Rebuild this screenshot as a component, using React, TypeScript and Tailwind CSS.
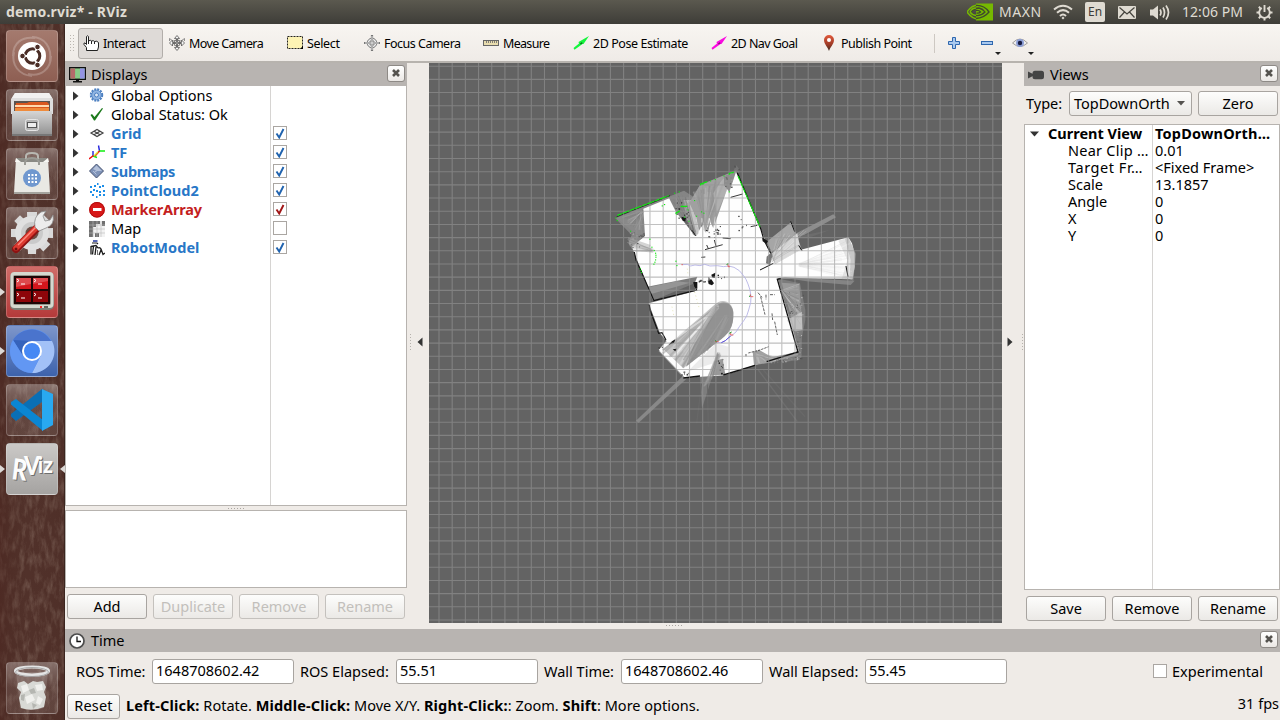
import React from "react";

/* ---------- shared helpers ---------- */

function rng(seed: number) {
  let s = seed;
  return () => {
    s = (s * 1664525 + 1013904223) % 4294967296;
    return s / 4294967296;
  };
}

type Pt = [number, number];

function fan(seed: number, from: Pt, a: Pt, b: Pt, count: number, lo: number, hi: number) {
  const r = rng(seed);
  return Array.from({ length: count }, (_, i) => {
    const t = (i + r()) / count;
    const k = 0.78 + r() * 0.24;
    const ex = a[0] + (b[0] - a[0]) * t;
    const ey = a[1] + (b[1] - a[1]) * t;
    const v = Math.round(lo + r() * (hi - lo));
    return {
      x1: from[0] + (r() - 0.5) * 10,
      y1: from[1] + (r() - 0.5) * 10,
      x2: from[0] + (ex - from[0]) * k,
      y2: from[1] + (ey - from[1]) * k,
      c: `rgb(${v},${v},${v})`,
      o: 0.2 + r() * 0.35,
    };
  });
}

function Fan(p: { seed: number; from: Pt; a: Pt; b: Pt; n: number; w?: number; lo?: number; hi?: number }) {
  return (
    <g strokeWidth={p.w ?? 3}>
      {fan(p.seed, p.from, p.a, p.b, p.n, p.lo ?? 105, p.hi ?? 215).map((l, i) => (
        <line key={i} x1={l.x1} y1={l.y1} x2={l.x2} y2={l.y2} stroke={l.c} opacity={l.o} />
      ))}
    </g>
  );
}

function Specks(p: { seed: number; x: number; y: number; w: number; h: number; n: number; dark?: boolean; slope?: number }) {
  const r = rng(p.seed);
  const items = Array.from({ length: p.n }, () => {
    const dx = r() * p.w;
    return { x: p.x + dx, y: p.y + r() * p.h + dx * (p.slope ?? 0), w: 2 + r() * 3, h: 2 + r() * 3, v: p.dark ? r() * 90 : 70 + r() * 120 };
  });
  return (
    <g>
      {items.map((s, i) => (
        <rect key={i} x={s.x} y={s.y} width={s.w} height={s.h} fill={`rgb(${Math.round(s.v)},${Math.round(s.v)},${Math.round(s.v)})`} />
      ))}
    </g>
  );
}

/* ---------- 3D view ---------- */

const STEP = 13.1857;

function gridPath() {
  let d = "";
  for (let i = -22; i <= 22; i++) {
    const x = 286.9 + i * STEP;
    d += `M${x.toFixed(2)} 0V560`;
    const y = 280.1 + i * STEP;
    d += `M0 ${y.toFixed(2)}H573`;
  }
  return d;
}

const GREEN_DOTS: Pt[] = [
  [46, 202], [50, 210], [90, 242], [148, 266], [154, 290], [161, 300], [165, 308], [166, 314], [166, 320], [165, 328], [163, 335], [160, 341],
  [226, 332], [229, 345], [185, 166], [192, 162], [244, 168], [250, 168], [256, 168], [228, 190], [234, 184], [282, 150],
  [303, 184], [310, 188], [265, 212], [252, 200], [300, 103], [307, 101], [330, 91], [344, 87], [370, 76], [386, 71],
  [396, 66], [119, 354], [121, 360], [123, 366], [386, 124], [288, 197], [262, 178], [236, 124], [222, 128],
];

function MapView() {
  return (
    <svg width="573" height="560" viewBox="0 0 573 560" className="block bg-[#636363]">
      <g transform="translate(171 87) scale(.33333)">
        {/* faint rays outside the room */}
        <path d="M262 665L108 812L116 818L272 675Z" fill="#888" />
        <path d="M300 675L306 775L340 670Z" fill="#7d7d7d" />
        <path d="M475 660L592 815" stroke="#6e6e6e" strokeWidth="4" />
        <path d="M490 660L615 800" stroke="#696969" strokeWidth="4" />
        <path d="M305 700L290 820M322 700L325 830" stroke="#686868" strokeWidth="3" />
        <path d="M510 290L700 193L708 202L600 262L520 320Z" fill="#8d8d8d" />
        <path d="M580 262L690 240L630 262Z" fill="#6c6c6c" />
        <path d="M500 275L574 216L586 245L606 300L520 345L512 300Z" fill="#a6a6a6" />
        <Fan seed={4} from={[512, 335]} a={[530, 255]} b={[625, 240]} n={34} lo={120} hi={225} />
        <path d="M400 64L408 45L420 60L415 75Z" fill="#747474" />
        <Specks seed={31} x={400} y={44} w={16} h={28} n={8} />
        {/* fringe */}
        <path d="M46 205L125 172L252 122L280 140L300 105L410 60L396 100L300 170L120 255L130 280L104 310L85 280L95 255Z" fill="#858585" />
        <path d="M530 385L600 400L616 480L616 510L606 560L604 628L560 635L520 620Z" fill="#7c7c7c" />
        <path d="M255 688L175 602L200 570Z" fill="#a2a2a2" />
        {/* free space */}
        <path d="M130 176L215 142L240 200L285 258L340 180L362 98L408 66L480 232L512 310L525 342L600 300L745 262L756 280L764 310L764 350L758 386L533 385L597 604L462 646L375 676L255 683L176 600L200 574L180 550L146 460L285 424L290 396L150 425L104 312L96 290L135 258Z" fill="#fefefe" />
        <path d="M84 262L152 285L145 300L88 285Z" fill="#aaa" opacity=".5" />
        <Fan seed={12} from={[160, 302]} a={[75, 262]} b={[92, 306]} n={16} w={2} lo={110} hi={190} />
        <path d="M50 204L128 174L112 200L132 258L104 250Z" fill="#8c8c8c" opacity=".6" />
        <Fan seed={14} from={[128, 185]} a={[54, 202]} b={[125, 255]} n={20} w={2} lo={80} hi={240} />
        {/* upper grey cones */}
        <path d="M206 142L252 124L270 145L266 214L245 208L228 186Z" fill="#858585" />
        <path d="M250 150L272 150L285 195L296 250L288 258L262 214Z" fill="#c4c4c4" />
        <Fan seed={2} from={[284, 250]} a={[212, 145]} b={[262, 132]} n={22} lo={90} hi={170} />
        <path d="M268 158L300 105L398 66L370 150L340 235L326 205L318 250L305 205L296 250L285 195Z" fill="#a0a0a0" />
        <Fan seed={7} from={[318, 240]} a={[280, 125]} b={[386, 76]} n={50} w={5} lo={125} hi={200} />
        <path d="M340 130L366 90L392 70L386 110L368 150L350 190Z" fill="#bdbdbd" opacity=".55" />
        <path d="M372 78L408 66L388 126L372 105Z" fill="#8d8d8d" />
        <Specks seed={9} x={370} y={78} w={26} h={36} n={14} />
        <path d="M287 200L298 256L306 205L316 258L328 205L338 252L346 200" fill="none" stroke="#fff" strokeWidth="3" opacity=".6" />
        {/* right corridor shade */}
        <path d="M735 266L745 262L768 312L760 392L748 388L752 330Z" fill="#999" opacity=".4" />
        <path d="M715 272L745 262L768 312L760 392L725 388L742 330Z" fill="#aaa" opacity=".3" />
        <Fan seed={15} from={[600, 345]} a={[748, 268]} b={[762, 394]} n={44} w={2} lo={205} hi={254} />
        <path d="M530 380L640 386L764 392L752 405L620 394Z" fill="#8a8a8a" opacity=".85" />
        <path d="M500 320L522 300L510 345L498 340Z" fill="#777" />
        <path d="M516 310L592 250L602 300L526 342Z" fill="#f0f0f0" opacity=".7" />
        <Fan seed={18} from={[516, 332]} a={[538, 245]} b={[600, 290]} n={12} w={3} lo={130} hi={210} />
        {/* left wedge */}
        <path d="M142 410L292 380L284 400L158 452Z" fill="#7c7c7c" />
        <path d="M146 412L230 394L270 398L154 432Z" fill="#adadad" opacity=".5" />
        {/* lower grey fan */}
        <path d="M400 485C398 455 365 440 342 466L190 598L250 655L350 575C385 555 401 530 400 485Z" fill="#c4c4c4" />
        <path d="M400 488C398 458 366 445 345 472L290 560L258 650L352 576C386 553 402 532 400 488Z" fill="#929292" />
        <Fan seed={22} from={[352, 470]} a={[180, 600]} b={[256, 655]} n={32} w={6} lo={130} hi={235} />
        <Fan seed={23} from={[380, 500]} a={[262, 644]} b={[345, 585]} n={22} w={6} lo={130} hi={170} />
        <path d="M322 498L192 590M300 530L215 625" stroke="#fff" strokeWidth="6" opacity=".5" />
        <path d="M350 578L262 665L340 640Z" fill="#ddd" opacity=".6" />
        {/* lower cones */}
        <path d="M344 632L368 626L376 674L330 676Z" fill="#989898" />
        <Fan seed={25} from={[358, 612]} a={[306, 720]} b={[345, 675]} n={14} w={4} lo={115} hi={190} />
        <path d="M458 605L478 600L515 622L590 606L595 615L520 636L462 646Z" fill="#a0a0a0" />
        <path d="M350 580L385 590L380 660L340 625Z" fill="#aaa" opacity=".2" />
        <Fan seed={26} from={[470, 610]} a={[470, 644]} b={[550, 626]} n={18} w={4} lo={130} hi={215} />
        {/* right-hand side room */}
        <path d="M545 398L598 402L608 540L586 545Z" fill="#999" />
        <Fan seed={28} from={[545, 425]} a={[600, 400]} b={[608, 535]} n={28} w={3} lo={110} hi={210} />
        <path d="M560 510L606 485L607 540L582 543Z" fill="#d5d5d5" opacity=".65" />
        <Specks seed={40} x={565} y={425} w={45} h={70} n={22} />
        <Specks seed={41} x={588} y={545} w={16} h={80} n={36} />
        <Specks seed={42} x={510} y={630} w={90} h={10} n={34} slope={-0.15} />
        <Specks seed={43} x={84} y={240} w={44} h={56} n={12} />
        {/* walls */}
        <g stroke="#111" strokeWidth="4" fill="none">
          <path d="M50 200L210 137" strokeWidth="2" />
          <path d="M103 306L108 330L124 365L162 452L290 420L282 398M148 464L150 480L176 550L186 548L198 570" strokeWidth="3.500" />
          <path d="M250 684L300 678M370 675L465 646M500 635L594 606L532 388L542 386" />
          <path d="M412 68L482 236L492 270L512 310" strokeWidth="3.500" />
          <path d="M480 360L520 340M572 214L584 245M596 286L606 302M738 348L744 380" strokeWidth="3" />
          <path d="M315 299L368 284M320 285L325 296M343 270L348 288M368 264L392 266M304 322L316 321" strokeWidth="2.500" />
          <path d="M275 240L288 258M452 230L472 226M392 142L428 132" strokeWidth="2.500" />
          <path d="M482 440L495 494M516 490L518 510M524 515L532 555M474 428L486 442M510 434H524M498 434V448" strokeWidth="2" strokeDasharray="9 3" />
          <path d="M445 609L480 600L506 590M438 612V622" strokeWidth="2" strokeDasharray="7 3" />
        </g>
        <g fill="#161616">
          <path d="M280 396L292 396L292 416L283 410ZM324 394L334 388L342 400L336 406L326 402ZM334 374L346 368L344 384L336 382Z" />
          <path d="M244 200L258 204L256 214L248 212ZM486 262L504 274L500 282L488 274ZM206 584L216 574L226 568L222 578ZM218 598L230 596L226 604Z" />
        </g>
        <Specks seed={50} x={296} y={380} w={38} h={14} n={12} dark />
        <Specks seed={51} x={312} y={228} w={50} h={34} n={18} dark />
        <Specks seed={52} x={404} y={190} w={46} h={50} n={6} dark />
        <Specks seed={53} x={172} y={590} w={16} h={12} n={4} dark />
        <Specks seed={54} x={346} y={372} w={26} h={12} n={4} dark />
        <Specks seed={55} x={350} y={625} w={24} h={46} n={8} dark />
        <Specks seed={56} x={244} y={664} w={32} h={16} n={6} dark />
        <Specks seed={57} x={225} y={148} w={42} h={60} n={14} dark />
      </g>
      <path d={gridPath()} stroke="#969696" strokeOpacity=".6" strokeWidth="1.1" fill="none" />
      <g transform="translate(171 87) scale(.33333)" fill="none">
        {/* laser hits */}
        <g stroke="#12e512" strokeWidth="3.500">
          <path d="M52 196L206 137M414 78L480 230" strokeDasharray="14 2 22 2" />
          <path d="M300 103L322 95M386 71L402 66M226 190L240 182M242 169H262" />
        </g>
        <g fill="#12e512">
          {GREEN_DOTS.map(([x, y]) => (
            <rect key={`${x}-${y}`} x={x} y={y} width="3.500" height="3.400" />
          ))}
        </g>
        <path
          d="M246 344L262 343L272 348L285 345L300 347L314 343L330 348L352 347L370 350L386 348L402 352L418 362L430 376L438 388L444 402L450 420L453 440L452 458L446 480L440 498L430 514L418 530L408 546L396 556L386 562L376 572L364 578L350 577"
          stroke="#b4b1e4"
          strokeWidth="2.600"
        />
        <path d="M392 558L376 572L364 578" stroke="#5a4fd6" strokeWidth="3" />
        <path d="M384 342V350H390M451 433V440H460M392 547V555H400M345 575H356" stroke="#e85050" strokeWidth="2.500" />
        <path d="M380 345L384 340M447 440L451 437M388 550L395 546M345 571L350 576" stroke="#18a030" strokeWidth="3" />
        <path d="M244 344H249" stroke="#e07070" strokeWidth="3" />
        <path d="M262 356L264 374M284 426L298 476M216 470L222 500" stroke="#d8d79a" strokeWidth="2" strokeDasharray="3 8" />
      </g>
    </svg>
  );
}

/* ---------- launcher ---------- */

function Tile({ tone, left, right, children }: { tone: string; left?: boolean; right?: boolean; children: React.ReactNode }) {
  return (
    <div className="relative flex h-[52px] w-[65px] shrink-0 items-center justify-center pr-px">
      {left && (
        <svg width="5" height="8" viewBox="0 0 5 8" className="absolute left-0 top-[22px]">
          <path d="M0 0L5 4L0 8Z" fill="#dcd9d6" />
        </svg>
      )}
      <div className={`flex h-[52px] w-[52px] items-center justify-center rounded-[4px] border border-white/20 ${tone}`}>{children}</div>
      {right && (
        <svg width="5" height="8" viewBox="0 0 5 8" className="absolute right-0 top-[22px]">
          <path d="M5 0L0 4L5 8Z" fill="#dcd9d6" />
        </svg>
      )}
    </div>
  );
}

const GLASS = "bg-linear-to-b from-white/30 via-white/10 to-white/10";

function Launcher() {
  return (
    <aside className="relative flex w-[65px] shrink-0 flex-col bg-[#51312a] pt-[6px] pb-[6px]">
      <svg className="absolute inset-0" width="65" height="696">
        <defs>
          <filter id="wood" x="0" y="0" width="100%" height="100%">
            <feTurbulence type="fractalNoise" baseFrequency=".2 .07" numOctaves="4" seed="5" />
            <feColorMatrix values="0 0 0 0 .52  0 0 0 0 .42  0 0 0 0 .34  1.2 0 0 0 -.5" />
          </filter>
          <linearGradient id="shade">
            <stop offset="0" stopColor="#4a241e" stopOpacity=".5" />
            <stop offset=".4" stopColor="#4a2a22" stopOpacity="0" />
            <stop offset="1" stopColor="#3a1f19" stopOpacity=".1" />
          </linearGradient>
        </defs>
        <rect width="65" height="696" filter="url(#wood)" opacity=".5" />
        <rect width="65" height="696" fill="url(#shade)" />
        <path d="M64.5 0V696" stroke="#3b251f" />
      </svg>
      <div className="relative flex flex-1 flex-col gap-[7px]">
        <Tile tone="bg-linear-to-b from-[#a47a6e] to-[#8e5f53]">
          <svg width="50" height="50" viewBox="0 0 50 50" fill="none">
            <path d="M25 6C38 6 45 17 43 30M44 25C44 38 34 46 21 43M25 45C12 44 4 34 7 21M6 25C6 12 15 5 28 7" stroke="#fff" strokeOpacity=".22" strokeWidth="2" />
            <circle cx="25" cy="25" r="14" fill="#fff" />
            <circle cx="25.500" cy="25" r="7.300" stroke="#4a2d26" strokeWidth="3" />
            <path d="M25.500 25L13 25M25.500 25L32 14M25.500 25L32 36" stroke="#fff" strokeWidth="1.800" />
            <g fill="#4a2d26" stroke="#fff" strokeWidth="1">
              <circle cx="15.500" cy="25" r="2.800" />
              <circle cx="30.500" cy="16" r="2.800" />
              <circle cx="30.500" cy="34" r="2.800" />
            </g>
          </svg>
        </Tile>
        <Tile tone={GLASS}>
          <svg width="50" height="50" viewBox="0 0 50 50">
            <defs>
              <linearGradient id="cab" x2="0" y2="1">
                <stop offset="0" stopColor="#d6d6d6" />
                <stop offset="1" stopColor="#8f8f8f" />
              </linearGradient>
            </defs>
            <path d="M8 3H42L46 9V24H4V9Z" fill="#dedede" />
            <path d="M8 3H42L45 8H5Z" fill="#f1f1f1" />
            <rect x="7" y="11" width="36" height="11" fill="#5a5450" />
            <path d="M9 13H20L22 12H40L42 14V22H8Z" fill="#d9581f" />
            <rect x="8" y="15" width="34" height="2" fill="#ffd9ae" />
            <rect x="8" y="18" width="34" height="4" fill="#ef8b3c" />
            <path d="M5 21H45V46H5Z" fill="url(#cab)" />
            <path d="M5 44H45V46H5Z" fill="#777" />
            <rect x="18.500" y="29.500" width="13" height="11" rx="2" fill="#b5b5b5" stroke="#e6e6e6" />
            <rect x="20.500" y="32.500" width="9" height="5" fill="#eee" stroke="#555" strokeWidth="1" />
          </svg>
        </Tile>
        <Tile tone={GLASS}>
          <svg width="50" height="50" viewBox="0 0 50 50">
            <path d="M9 9L41 9L43 44H7Z" fill="#e9e9e4" />
            <path d="M7 43H43V45H7Z" fill="#a4a49e" />
            <path d="M9 9L41 9L40 13L10 13Z" fill="#8a8a84" />
            <path d="M9 9L14 13H8ZM41 9L36 13H42Z" fill="#f8f8f4" />
            <g fill="none" strokeWidth="2">
              <path d="M19 10V7Q19 4 25 4Q31 4 31 7V10" stroke="#b8b8b2" />
              <path d="M18 16V14Q18 9 25 9Q32 9 32 14V16" stroke="#9a9a94" />
            </g>
            <circle cx="25" cy="29" r="9" fill="#7098cf" />
            <path d="M21 25h2v2h-2zM24.500 25h2v2h-2zM28 25h2v2h-2zM21 28.500h2v2h-2zM24.500 28.500h2v2h-2zM28 28.500h2v2h-2zM21 32h2v2h-2zM24.500 32h2v2h-2zM28 32h2v2h-2z" fill="#fff" />
          </svg>
        </Tile>
        <Tile tone={GLASS}>
          <svg width="50" height="50" viewBox="0 0 50 50">
            <g transform="translate(25 25)">
              <g fill="#d9d9d9">
                {[0, 45, 90, 135].map((a) => (
                  <path key={a} d="M-5 -21H5L4 21H-4Z" transform={`rotate(${a})`} />
                ))}
              </g>
              <circle r="17" fill="#e0e0e0" />
              <circle r="11" fill="#cacaca" />
              <circle r="6.500" fill="#6c4e46" />
            </g>
            <path d="M9 41L32 18" stroke="#8e1212" strokeWidth="8" strokeLinecap="round" />
            <path d="M9 40L31 18" stroke="#dc3a30" strokeWidth="5.500" strokeLinecap="round" />
            <path d="M11 37L29 19" stroke="#ff8b7e" strokeWidth="1.500" />
            <path d="M28 19Q26 9 34 4L39 3L36 8L38 13L43 12L46 7Q48 17 39 20L32 23Z" fill="#ececec" stroke="#8c8c8c" strokeWidth=".8" />
            <circle cx="9" cy="41" r="1.500" fill="#6c1010" />
          </svg>
        </Tile>
        <Tile tone="bg-linear-to-b from-[#cf6c68] to-[#b43a3a]" left>
          <svg width="50" height="50" viewBox="0 0 50 50">
            <rect x="3" y="5" width="44" height="38" rx="5" fill="#7e8078" />
            <rect x="3.500" y="5" width="43" height="36" rx="4" fill="#d5d8cf" />
            <rect x="6" y="8" width="38" height="30" rx="2" fill="#93958c" />
            <rect x="7" y="9" width="36" height="28" fill="#1e0505" />
            <path d="M9 11H24V22H9ZM26 11H41V22H26Z" fill="#d5161c" />
            <path d="M9 24H24V35H9ZM26 24H41V35H26Z" fill="#8d0509" />
            <path d="M9 11H24V17L9 20ZM26 11H41V14L26 17Z" fill="#fff" opacity=".22" />
            <path d="M10 12L12 13.500L10 15M14 17H18M27 12L29 13.500L27 15M31 17H35M10 26L12 27.500L10 29M14 31H18M27 26L29 27.500L27 29M31 31H35" stroke="#fff" fill="none" />
            <rect x="33" y="39" width="2" height="2" fill="#f22" />
            <rect x="37" y="39" width="4" height="2" fill="#62645c" />
          </svg>
        </Tile>
        <Tile tone="bg-linear-to-b from-[#7e96ca] to-[#3d62ac]" left>
          <svg width="50" height="50" viewBox="0 0 50 50">
            <circle cx="25" cy="25" r="22" fill="#5a8fee" />
            <path d="M25 25L6 14A22 22 0 0 1 44 15H25Z" fill="#4a74cd" />
            <path d="M25 15H45A22 22 0 0 1 25 47L33.700 30Z" fill="#a2c1f7" />
            <path d="M25 15L6 14L16 30Z" fill="#3563bc" />
            <path d="M6 14A22 22 0 0 0 25 47L33 31L16 30Z" fill="#6297f3" />
            <circle cx="25" cy="25" r="10" fill="#fff" />
            <circle cx="25" cy="25" r="8" fill="#4688f4" />
          </svg>
        </Tile>
        <Tile tone={GLASS}>
          <svg width="50" height="50" viewBox="0 0 50 50">
            <path d="M35 4V17L9 36L4 31.500V29Z" fill="#0a6fb5" />
            <path d="M4 17L9 14L36 35V46L4 19.500Z" fill="#0b86d2" />
            <path d="M35 4L46 9V40L35 46Z" fill="#29a9f0" />
          </svg>
        </Tile>
        <Tile tone="bg-linear-to-b from-[#cbc9c7] to-[#a5a3a1]" left right>
          <svg width="50" height="50" viewBox="0 0 50 50" fontFamily="Lato, sans-serif" fontWeight="900">
            <g fill="#6e6e6e">
              <text x="5" y="36" fontSize="29" textLength="15" lengthAdjust="spacingAndGlyphs" transform="rotate(7 5 36)">R</text>
              <text x="18" y="31.500" fontSize="26" textLength="16" lengthAdjust="spacingAndGlyphs">V</text>
              <text x="32" y="30" fontSize="22" textLength="5" lengthAdjust="spacingAndGlyphs">i</text>
              <text x="37" y="29.500" fontSize="22" textLength="10" lengthAdjust="spacingAndGlyphs">z</text>
            </g>
            <g fill="#fdfdfd">
              <text x="4" y="35" fontSize="29" textLength="15" lengthAdjust="spacingAndGlyphs" transform="rotate(7 4 35)">R</text>
              <text x="17" y="30.500" fontSize="26" textLength="16" lengthAdjust="spacingAndGlyphs">V</text>
              <text x="31" y="29" fontSize="22" textLength="5" lengthAdjust="spacingAndGlyphs">i</text>
              <text x="36" y="28.500" fontSize="22" textLength="10" lengthAdjust="spacingAndGlyphs">z</text>
            </g>
          </svg>
        </Tile>
        <div className="flex-1" />
        <Tile tone={GLASS}>
          <svg width="50" height="50" viewBox="0 0 50 50">
            <path d="M9 9L13 45Q25 49 37 45L41 9Z" fill="#fff" opacity=".14" />
            <path d="M11 20L17 18L21 21L26 18L30 19L36 18L39 24L37 29L39 34L37 44Q25 49 14 45L12 35L14 29L10 25Z" fill="#d8d9d5" />
            <path d="M14 23L20 21L22 27L16 30ZM28 22L35 21L36 27L30 28ZM18 34L25 31L28 37L20 41ZM31 33L36 36L33 42L29 40Z" fill="#f0f0ed" />
            <path d="M22 27L27 25L29 30L24 31ZM14 32L18 31L17 38L14 37ZM25 40L30 42L26 46Z" fill="#b5b6b1" />
            <ellipse cx="25" cy="8" rx="16.500" ry="4" fill="none" stroke="#e4e4e4" strokeWidth="3.200" />
            <ellipse cx="25" cy="9" rx="16.500" ry="4.500" fill="none" stroke="#999" strokeWidth=".8" />
          </svg>
        </Tile>
      </div>
    </aside>
  );
}

/* ---------- top bar ---------- */

function TopBar() {
  return (
    <header className="flex h-6 items-center bg-linear-to-b from-[#5b594f] to-[#3e3d38] text-[#dfdbd2]">
      <div className="w-[967px] whitespace-pre pl-[6px] text-[14px] font-bold leading-6 tracking-[0.2px]">demo.rviz* - RViz</div>
      <div className="w-8">
        <svg width="27" height="18" viewBox="0 0 27 18">
          <rect x="9" y="0.500" width="17" height="17" fill="#76b900" />
          <path d="M0 9Q5 2 11 2Q18 2 23 9Q18 16 11 16Q5 16 0 9Z" fill="none" stroke="#76b900" strokeWidth="1.600" />
          <path d="M9 2.500Q17 2 22 9Q17 15 9 15.500M4 9Q7 5 12 5Q16 6 18 9Q14 13 9 12.500Q5 11 4 9M9 7.500Q12 7 13.500 9Q12 10.500 9.500 10" fill="none" stroke="#3f4a2c" strokeWidth="1.300" />
          <path d="M3 9Q5 5 9 5M9 12.500Q5 12 3 9" fill="none" stroke="#76b900" strokeWidth="1.400" />
        </svg>
      </div>
      <div className="w-[54px] text-[14px] leading-6 tracking-[0.55px]">MAXN</div>
      <div className="w-8">
        <svg width="20" height="18" viewBox="0 0 20 18" fill="none" stroke="#dfdbd2" strokeWidth="2">
          <path d="M1 6.500Q10 -1 19 6.500" />
          <path d="M4 9.700Q10 4.500 16 9.700" />
          <path d="M7 13Q10 10 13 13" />
          <path d="M8.500 15L10 13.500L11.500 15L10 16.500Z" fill="#dfdbd2" stroke="none" />
        </svg>
      </div>
      <div className="w-[33px]">
        <div className="flex h-5 w-5 items-center justify-center rounded-[2px] bg-[#dfdbd2] text-[12px] text-[#3c3b37]">En</div>
      </div>
      <div className="w-8">
        <svg width="18" height="13" viewBox="0 0 18 13">
          <rect width="18" height="13" rx="1" fill="#dfdbd2" />
          <path d="M1.500 1.500L9 8L16.500 1.500M1.500 11.500L6.500 6M16.500 11.500L11.500 6" fill="none" stroke="#45443e" strokeWidth="1.200" />
        </svg>
      </div>
      <div className="w-8">
        <svg width="21" height="17" viewBox="0 0 21 17">
          <path d="M0 5.500H3L8 1.500V15.500L3 11.500H0Z" fill="#dfdbd2" />
          <path d="M10 5.500Q12 8.500 10 11.500M13 3.500Q16 8.500 13 13.500M16 1.500Q21 8.500 16 15.500" fill="none" stroke="#dfdbd2" strokeWidth="1.700" />
        </svg>
      </div>
      <div className="w-[74px] whitespace-pre text-[14px] leading-6 tracking-[0.050px]">12:06 PM</div>
      <svg width="17" height="17" viewBox="0 0 17 17" fill="none" stroke="#dfdbd2">
        <path d="M5.800 4A5.300 5.300 0 1 0 11.200 4" strokeWidth="1.900" />
        <path d="M8.500 1V8" strokeWidth="1.900" />
        <path d="M0.500 8.500H3M14 8.500H16.500M2.800 2.800L4.700 4.700M14.200 2.800L12.300 4.700M2.800 14.200L4.700 12.300M14.200 14.200L12.300 12.300M8.500 14V16.500" strokeWidth="2" />
      </svg>
    </header>
  );
}

/* ---------- toolbar ---------- */

const Crosshair = ({ globe }: { globe?: boolean }) => (
  <svg width="16" height="16" viewBox="0 0 16 16" fill="none" stroke="#555" strokeWidth="1">
    {globe ? (
      <>
        <circle cx="8" cy="8" r="4.800" fill="#efefef" stroke="#777" />
        <circle cx="8" cy="8" r="2.500" stroke="#777" />
        <path d="M8 0V16M0 8H16" stroke="#777" strokeWidth="2.200" />
        <path d="M8 1V15M1 8H15" stroke="#fff" strokeWidth=".8" />
      </>
    ) : (
      <>
        <path d="M8 0.500L10.500 3.500H8.500V7.500H12.500V5L15.500 8L12.500 11V8.500H8.500V12.500H10.500L8 15.500L5.500 12.500H7.500V8.500H3.500V11L0.500 8L3.500 5V7.500H7.500V3.500H5.500Z" fill="#f6f6f6" strokeWidth=".8" />
        <circle cx="8" cy="8" r="3.200" strokeWidth=".8" />
        <path d="M.5 3.500L4 6L8 5.500L12 6L15.500 3.500M.5 3.500V6M15.500 3.500V6" stroke="#777" strokeWidth=".8" />
      </>
    )}
  </svg>
);

const Arrow = ({ c, d }: { c: string; d: string }) => (
  <svg width="16" height="16" viewBox="0 0 16 16">
    <path d="M0.500 13L6 8.500L5.500 7L16 1L10.500 9L9.500 9L1.500 14.800Z" fill={c} />
    <path d="M7 8.500L9 7L9.500 8.500L7.500 9.500Z" fill={d} />
  </svg>
);

function Toolbar() {
  const items: { w: string; icon: React.ReactNode; label: string; tr: string }[] = [
    { w: "w-[118px]", icon: <Crosshair />, label: "Move Camera", tr: "tracking-[-0.62px]" },
    {
      w: "w-[77px]",
      icon: (
        <svg width="16" height="16" viewBox="0 0 16 16">
          <rect x=".5" y="1.500" width="15" height="12" fill="#fdf3b4" stroke="#222" strokeDasharray="2 1" />
          <path d="M16 11V14H13Z" fill="#000" />
        </svg>
      ),
      label: "Select",
      tr: "tracking-[-0.35px]",
    },
    { w: "w-[119px]", icon: <Crosshair globe />, label: "Focus Camera", tr: "tracking-[-0.5px]" },
    {
      w: "w-[90px]",
      icon: (
        <svg width="16" height="16" viewBox="0 0 16 16">
          <rect x=".5" y="5.500" width="15" height="5" fill="#e8dcae" stroke="#666" />
          <path d="M3.500 6V8M5.500 6V8M7.500 6V8M9.500 6V8M11.500 6V8M13.500 6V8" stroke="#666" strokeWidth=".8" />
        </svg>
      ),
      label: "Measure",
      tr: "tracking-[-0.68px]",
    },
    { w: "w-[138px]", icon: <Arrow c="#14f53c" d="#0a6e1c" />, label: "2D Pose Estimate", tr: "tracking-[-0.44px]" },
    { w: "w-[110px]", icon: <Arrow c="#fa0ae0" d="#8a0a7c" />, label: "2D Nav Goal", tr: "tracking-[-0.55px]" },
    {
      w: "w-[113px]",
      icon: (
        <svg width="16" height="16" viewBox="0 0 16 16">
          <defs>
            <linearGradient id="pin" x2="0" y2="1">
              <stop offset="0" stopColor="#e25a3c" />
              <stop offset=".6" stopColor="#9c3a26" />
              <stop offset="1" stopColor="#3d2b1f" />
            </linearGradient>
          </defs>
          <path d="M8 16C7 12.500 3 9 3 5A5 5 0 0 1 13 5C13 9 9 12.500 8 16Z" fill="url(#pin)" />
          <circle cx="8" cy="5" r="2" fill="#fff" />
        </svg>
      ),
      label: "Publish Point",
      tr: "tracking-[-0.5px]",
    },
  ];
  return (
    <div className="flex h-[39px] items-center border-b-2 border-[#b7b3ae] bg-linear-to-b from-[#f8f5f1] to-[#efebe7] pl-[5px] pt-px text-[12.500px] text-black">
      <svg width="8" height="18" className="shrink-0">
        <path d="M.5 1V17M3.500 1V17" stroke="#bbb6b0" strokeDasharray="1 2" />
      </svg>
      <div className="flex h-[31px] w-[85px] shrink-0 items-center gap-1 rounded-[3px] border border-[#b2aeaa] bg-[#dedad7] pl-1">
        <svg width="17" height="16" viewBox="0 0 17 16" fill="#fff" stroke="#222" strokeWidth="1">
          <path d="M3.500 15.500V12.500L1 9.500Q0.500 7.500 2 8L3.500 9.500V1.500Q4.500 0 5.500 1.500V6Q7.500 4.500 8.500 6Q10.500 5 11.500 6.500Q14 5.500 15.500 7.500V12L14.500 15.500Z" />
          <path d="M5.500 6V9M8.500 6V9M11.500 6.500V9" />
        </svg>
        <span className="-ml-px mt-0.5 tracking-[-0.450px]">Interact</span>
      </div>
      <div className="w-[6px] shrink-0" />
      {items.map((it) => (
        <div key={it.label} className={`flex shrink-0 items-center gap-1 whitespace-nowrap ${it.w}`}>
          {it.icon}
          <span className={`mt-0.5 ${it.tr}`}>{it.label}</span>
        </div>
      ))}
      <div className="h-[19px] w-[14px] shrink-0 border-l border-[#cdc8c2]" />
      <svg width="12" height="12" viewBox="0 0 12 12" className="mr-[21px] shrink-0">
        <path d="M4.500 .5H7.500V4.500H11.500V7.500H7.500V11.500H4.500V7.500H.5V4.500H4.500Z" fill="#a9c9ef" stroke="#2f67ae" />
      </svg>
      <svg width="31" height="24" viewBox="0 0 31 24" className="shrink-0">
        <rect x=".5" y="10.500" width="11" height="3" fill="#a9c9ef" stroke="#2f67ae" />
        <path d="M14 21H20L17 24Z" fill="#222" />
      </svg>
      <svg width="24" height="24" viewBox="0 0 24 24" className="shrink-0">
        <path d="M0.500 12Q8 4 15.500 12Q8 19 0.500 12Z" fill="#efefef" stroke="#a09c98" />
        <circle cx="8" cy="12" r="4" fill="#8d9fd6" />
        <circle cx="8" cy="12" r="2.200" fill="#171b40" />
        <path d="M16 21H22L19 24Z" fill="#222" />
      </svg>
    </div>
  );
}

/* ---------- widgets ---------- */

function DockHeader({ icon, title }: { icon: React.ReactNode; title: string }) {
  return (
    <div className="flex h-[23px] shrink-0 items-center bg-[#b8b4b1] pl-1 pr-[2px] text-[14.500px]">
      <div className="flex w-[22px] items-center">{icon}</div>
      <span>{title}</span>
      <div className="mb-[3px] ml-auto flex h-[17px] w-[18px] items-center justify-center rounded-[3px] border border-[#8e8a86] bg-linear-to-b from-white to-[#ebe8e5]">
        <svg width="8" height="8" viewBox="0 0 8 8">
          <path d="M1 1L7 7M7 1L1 7" stroke="#55534f" strokeWidth="2.600" />
        </svg>
      </div>
    </div>
  );
}

function Btn({ label, off, w = "w-20", tr = "" }: { label: string; off?: boolean; w?: string; tr?: string }) {
  return (
    <button
      className={`flex h-[25px] shrink-0 items-center justify-center rounded-[3px] border bg-linear-to-b from-[#fdfdfc] to-[#ebe9e6] text-[14.500px] ${w} ${tr} ${
        off ? "border-[#c4c1bd] text-[#c2bfbb]" : "border-[#a8a4a0] text-black"
      }`}
    >
      {label}
    </button>
  );
}

function Check({ color }: { color?: string }) {
  return (
    <span className="flex h-[14px] w-[14px] shrink-0 items-center justify-center border border-[#aaa6a2] bg-white">
      {color && (
        <svg width="10" height="11" viewBox="0 0 10 11">
          <path d="M1.500 5.500L4.200 9.500L8.500 1" fill="none" stroke={color} strokeWidth="1.900" />
        </svg>
      )}
    </span>
  );
}

const ICONS: Record<string, React.ReactNode> = {
  options: (
    <g>
      <circle cx="7.500" cy="7" r="5.400" fill="none" stroke="#4c7fc0" strokeWidth="2.600" strokeDasharray="1.900 .930" />
      <circle cx="7.500" cy="7" r="4.800" fill="#8fb4e2" stroke="#5a8bc9" />
      <circle cx="7.500" cy="7" r="2" fill="#dce8f6" stroke="#4c7fc0" />
    </g>
  ),
  status: <path d="M1.500 8L3 7L5.500 10L13 1L14 1.500L6 13.500H5Z" fill="#1c7a1c" />,
  grid: <path d="M2 7L8 3.500L14 7L8 10.500ZM5 5.200L11 8.800M11 5.200L5 8.800" fill="none" stroke="#444" strokeWidth="1.200" />,
  tf: (
    <g fill="none" strokeWidth="1.400">
      <path d="M4 6V11M9.500 0.500L10.500 6" stroke="#22d" />
      <path d="M4 11L8 12.500M10 6H16" stroke="#1e1" strokeWidth="1.400" />
      <path d="M0 14L4.500 10.500M6 11L10.500 6" stroke="#e11" strokeWidth="1.500" />
      <path d="M5 11L9 7" stroke="#dd2" />
    </g>
  ),
  submaps: (
    <g>
      <path d="M7.500 0L14.500 7L7.500 14L.5 7Z" fill="#7f93b8" stroke="#465270" />
      <path d="M7.500 1.500L13 7L7.500 7L4 5Z" fill="#b4c1da" />
      <path d="M5 8.500L10 5.500M4 7L7.500 10.500" stroke="#b4c1da" />
    </g>
  ),
  cloud: (
    <path
      d="M1 3h2v2h-2zM5 2h2v2h-2zM8 0h1.500v2h-1.500zM10 3h2v2h-2zM13 2h2v2h-2zM4 6h2v2h-2zM1 8h2v2h-2zM7 7h2v2h-2zM10 8h2v2h-2zM14 7h2v2h-2zM3 11h2v2h-2zM7 13h1.500v2h-1.500zM10 11h2v2h-2zM14 11h2v2h-2z"
      fill="#1c8ee8"
    />
  ),
  error: (
    <g>
      <circle cx="8" cy="7.800" r="7.800" fill="#d81818" />
      <circle cx="8" cy="7.800" r="7.300" fill="none" stroke="#b00d0d" />
      <rect x="4" y="6" width="8.500" height="3" fill="#fff" />
    </g>
  ),
  map: (
    <g>
      <rect width="16" height="16" fill="#f2f2f2" />
      <path d="M0 0H11V3H7V6H4V16H0ZM13 0H16V5H13ZM6 12H10V16H6Z" fill="#707070" />
      <path d="M4 0V16M8 0V16M12 0V16M0 4H16M0 8H16M0 12H16" stroke="#bbb" strokeWidth=".6" />
    </g>
  ),
  robot: (
    <g fill="none" stroke="#1c1c1c">
      <path d="M4 1H8.500" stroke="#2b3fa0" strokeWidth="1.600" />
      <path d="M3 3H8L9 4" strokeWidth="1.200" />
      <path d="M2 6V14.500M4.500 6L3.500 14.500M7 7L6 15M2 6.500L7 5.500L9 8" strokeWidth="1.300" />
      <path d="M9 8Q12 7 12 10L10 15M12 9L14 14.500L16 13" strokeWidth="1.300" />
      <path d="M8.500 10V15" stroke="#777" />
    </g>
  ),
};

const BLUE = "#1f62ae";

const DISPLAYS: { name: string; icon: string; style: string; box?: string; checked?: string }[] = [
  { name: "Global Options", icon: "options", style: "text-black" },
  { name: "Global Status: Ok", icon: "status", style: "text-black" },
  { name: "Grid", icon: "grid", style: "font-bold text-[#2877c7]", box: "y", checked: BLUE },
  { name: "TF", icon: "tf", style: "font-bold text-[#2877c7]", box: "y", checked: BLUE },
  { name: "Submaps", icon: "submaps", style: "font-bold text-[#2877c7] tracking-[-0.250px]", box: "y", checked: BLUE },
  { name: "PointCloud2", icon: "cloud", style: "font-bold text-[#2877c7]", box: "y", checked: BLUE },
  { name: "MarkerArray", icon: "error", style: "font-bold text-[#c41e1e] tracking-[-0.150px]", box: "y", checked: "#a01414" },
  { name: "Map", icon: "map", style: "text-black", box: "y" },
  { name: "RobotModel", icon: "robot", style: "font-bold text-[#2877c7] tracking-[0.050px]", box: "y", checked: BLUE },
];

function Displays() {
  return (
    <section className="flex w-[342px] shrink-0 flex-col">
      <DockHeader
        title="Displays"
        icon={
          <svg width="17" height="16" viewBox="0 0 17 16">
            <rect x=".7" y=".7" width="15.600" height="11.600" fill="#8c8" stroke="#111" strokeWidth="1.400" />
            <rect x="1.400" y="1.400" width="4.700" height="10.200" fill="#b56b6b" />
            <rect x="11" y="1.400" width="4.700" height="10.200" fill="#9494e4" />
            <path d="M7 12H10V14H13V15.500H4V14H7Z" fill="#111" />
          </svg>
        }
      />
      <div className="flex h-[420px] flex-col border-b border-l border-r border-[#b7b3af] bg-white">
        <div className="relative flex flex-1 flex-col">
          <div className="absolute top-0 bottom-0 left-[204px] w-px bg-[#d6d4d2]" />
          {DISPLAYS.map((d) => (
            <div key={d.name} className="flex h-[19px] items-center pl-[7px] text-[14.500px] leading-[19px]">
              <svg width="6" height="10" viewBox="0 0 6 10" className="mr-[10px] shrink-0">
                <path d="M0 0.500L5.500 5L0 9.500Z" fill="#333" />
              </svg>
              <svg width="16" height="16" viewBox="0 0 16 16" className="shrink-0">
                {ICONS[d.icon]}
              </svg>
              <span className={`w-[168px] shrink-0 whitespace-nowrap pl-[6px] ${d.style}`}>{d.name}</span>
              {d.box && (
                <span className="-mt-px">
                  <Check color={d.checked} />
                </span>
              )}
            </div>
          ))}
        </div>
      </div>
      <div className="flex h-1 items-center justify-center">
        <svg width="17" height="1">
          <path d="M0 .5H17" stroke="#aaa6a2" strokeDasharray="1 2" />
        </svg>
      </div>
      <div className="h-[78px] border border-[#b7b3af] bg-white" />
      <div className="mt-[6px] flex gap-[6px] pl-[2px]">
        <Btn label="Add" />
        <Btn label="Duplicate" off />
        <Btn label="Remove" off />
        <Btn label="Rename" off />
      </div>
    </section>
  );
}

function Gutter({ dir }: { dir: "left" | "right" }) {
  const dots = (
    <svg width="3" height="17" className="shrink-0">
      <path d="M1.500 0V17" stroke="#b5b1ac" strokeDasharray="1 2" />
    </svg>
  );
  const arrow = (
    <svg width="6" height="10" viewBox="0 0 6 10" className="shrink-0">
      <path d={dir === "left" ? "M5.500 .5L.5 5L5.500 9.500Z" : "M.5 .5L5.500 5L.5 9.500Z"} fill="#333" />
    </svg>
  );
  return (
    <div className={`flex w-[22px] shrink-0 items-center justify-between pb-[2px] ${dir === "left" ? "pl-[2px] pr-[6px]" : "pl-[5px] pr-0"}`}>
      {dir === "left" ? (
        <>
          {dots}
          {arrow}
        </>
      ) : (
        <>
          {arrow}
          {dots}
        </>
      )}
    </div>
  );
}

const VIEW_ROWS = [
  ["Near Clip …", "0.01", "tracking-[0.250px]"],
  ["Target Fr…", "<Fixed Frame>", "tracking-[0.550px]"],
  ["Scale", "13.1857", ""],
  ["Angle", "0", ""],
  ["X", "0", ""],
  ["Y", "0", ""],
];

function Views() {
  return (
    <section className="flex w-[256px] shrink-0 flex-col">
      <DockHeader
        title="Views"
        icon={
          <svg width="17" height="10" viewBox="0 0 17 10">
            <path d="M0 1.500L5 4V6L0 8.500Z" fill="#444" />
            <rect x="4.500" y=".8" width="11.500" height="8.400" rx="2.500" fill="#444" />
          </svg>
        }
      />
      <div className="mt-[5px] flex h-[25px] items-center pl-[2px] text-[14.500px]">
        <span className="w-[43px]">Type:</span>
        <div className="flex h-[25px] w-[123px] items-center justify-between rounded-[3px] border border-[#a8a4a0] bg-linear-to-b from-[#fdfdfc] to-[#ebe9e6] pl-[4px] pr-[6px]">
          <span>TopDownOrth</span>
          <svg width="8" height="5" viewBox="0 0 8 5">
            <path d="M0 0H8L4 4.500Z" fill="#55534f" />
          </svg>
        </div>
        <div className="w-[6px]" />
        <Btn label="Zero" />
      </div>
      <div className="relative mt-[8px] h-[466px] border border-[#b7b3af] bg-white text-[14.500px] leading-[17px]">
        <div className="absolute top-0 bottom-0 left-[127px] w-px bg-[#d6d4d2]" />
        <div className="flex h-[17px] items-center font-bold">
          <svg width="23" height="8" viewBox="0 0 23 8">
            <path d="M5 1.500H14L9.500 6.500Z" fill="#333" />
          </svg>
          <span className="w-[107px] whitespace-nowrap">Current View</span>
          <span className="whitespace-nowrap tracking-[0.200px]">TopDownOrth…</span>
        </div>
        {VIEW_ROWS.map(([k, v, t]) => (
          <div key={k} className="flex h-[17px] items-center pl-[43px]">
            <span className={`w-[87px] whitespace-nowrap ${t}`}>{k}</span>
            <span className="whitespace-nowrap">{v}</span>
          </div>
        ))}
      </div>
      <div className="mt-[6px] flex gap-[6px] pl-[2px]">
        <Btn label="Save" />
        <Btn label="Remove" />
        <Btn label="Rename" />
      </div>
    </section>
  );
}

function TimePanel() {
  const fields = [
    ["ROS Time:", "1648708602.42", "w-[76px]"],
    ["ROS Elapsed:", "55.51", "w-[96px]"],
    ["Wall Time:", "1648708602.46", "w-[77px]"],
    ["Wall Elapsed:", "55.45", "w-[96px]"],
  ];
  return (
    <section className="flex flex-col">
      <DockHeader
        title="Time"
        icon={
          <svg width="16" height="16" viewBox="0 0 16 16">
            <circle cx="8" cy="8" r="7" fill="#fff" stroke="#4c4c4c" strokeWidth="1.700" />
            <path d="M8 3.500V8.500H12" fill="none" stroke="#111" strokeWidth="1.300" />
          </svg>
        }
      />
      <div className="mt-[6px] flex h-[26px] items-center gap-[6px] pl-[11px] text-[14.500px]">
        {fields.map(([l, v, w]) => (
          <div key={l} className="flex shrink-0 items-center">
            <span className={`mt-px whitespace-nowrap ${w}`}>{l}</span>
            <div className="flex h-[25px] w-[142px] items-center rounded-[3px] border border-[#a8a4a0] bg-white pl-[3px]">{v}</div>
          </div>
        ))}
        <div className="ml-[140px] flex items-center gap-[5px]">
          <Check />
          <span className="mt-px tracking-[0.050px]">Experimental</span>
        </div>
      </div>
      <div className="mt-[9px] flex h-[26px] items-center pl-[2px] text-[14.500px]">
        <Btn label="Reset" w="w-[53px]" tr="tracking-[0.200px]" />
        <p className="ml-[6px] whitespace-nowrap tracking-[0.010px] [&_b]:tracking-[0.160px]">
          <b>Left-Click:</b> Rotate. <b>Middle-Click:</b> Move X/Y. <b>Right-Click:</b>: Zoom. <b>Shift</b>: More options.
        </p>
        <span className="mb-[5px] ml-auto whitespace-nowrap pr-px text-[14.500px]">31 fps</span>
      </div>
    </section>
  );
}

export default function App() {
  return (
    <div className="flex h-[720px] w-[1280px] flex-col overflow-hidden bg-[#efebe7] font-['Noto_Sans',sans-serif] text-black">
      <TopBar />
      <div className="flex flex-1">
        <Launcher />
        <main className="flex w-[1215px] flex-col">
          <Toolbar />
          <div className="flex h-[560px] shrink-0">
            <Displays />
            <Gutter dir="left" />
            <MapView />
            <Gutter dir="right" />
            <Views />
          </div>
          <div className="flex h-[6px] shrink-0 items-start justify-center pl-1 pt-[2px]">
            <svg width="17" height="1">
              <path d="M0 .5H17" stroke="#aaa6a2" strokeDasharray="1 2" />
            </svg>
          </div>
          <TimePanel />
        </main>
      </div>
    </div>
  );
}
